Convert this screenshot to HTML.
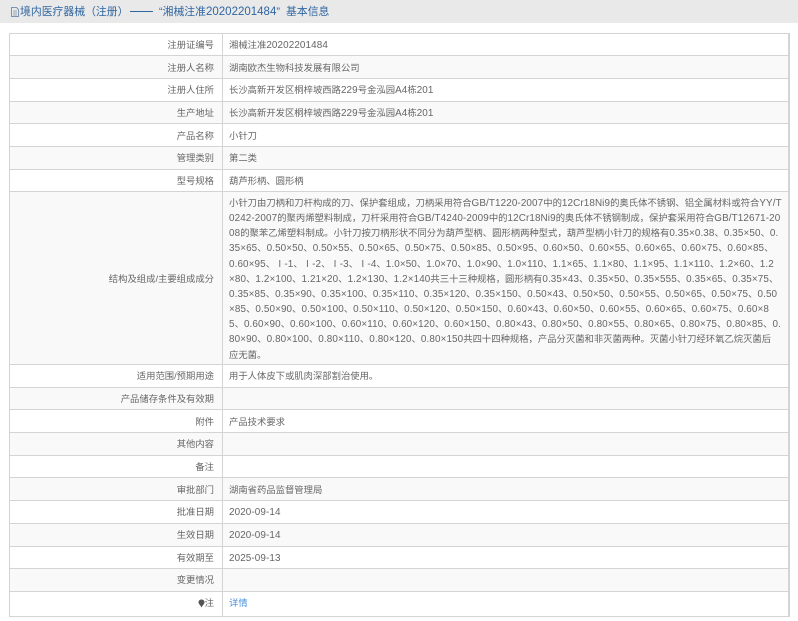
<!DOCTYPE html>
<html lang="zh-CN">
<head>
<meta charset="utf-8">
<title>基本信息</title>
<style>
html,body{margin:0;padding:0;background:#fff}
body{position:relative;width:798px;height:621px;overflow:hidden;font-family:"Liberation Sans","Noto Sans CJK SC",sans-serif;font-size:9.33px;color:#666}
.h{position:absolute;left:0;top:0;width:798px;height:23px;background:#e9e9e9}
.t{position:absolute;top:5px;height:14px;line-height:14px;white-space:nowrap;font-size:10.85px;color:#2f66a0;filter:blur(.2px)}
.t b{font-weight:normal;font-size:11.5px;letter-spacing:0}
.r{position:absolute;left:9px;width:779px;border-top:1px solid #d4d4d4;box-sizing:border-box}
.g{background:#f9f9f9}
.l{position:absolute;left:10px;width:204px;text-align:right;white-space:nowrap;line-height:14px;height:14px;filter:blur(.2px)}
.v{position:absolute;left:229px;white-space:nowrap;line-height:14px;height:14px;filter:blur(.2px)}
b{font-weight:normal;font-size:9.9px;letter-spacing:.11px}
.vl{position:absolute;top:33px;left:222px;width:1px;height:583px;background:#d4d4d4}
.bl{position:absolute;top:33px;left:9px;width:1px;height:584px;background:#d4d4d4}
.br{position:absolute;top:33px;left:788px;width:2px;height:584px;background:#d4d4d4}
.bb{position:absolute;top:616px;left:9px;width:781px;height:1px;background:#d4d4d4}
</style>
</head>
<body>
<div class="h"></div>
<svg style="position:absolute;left:10px;top:6px" width="10" height="12" viewBox="0 0 10 12" fill="none" stroke="#7d93ad" stroke-width="1"><path d="M1.5 1.5H6.5L8.5 3.5V10.5H1.5Z"/><path d="M3 5H7M3 7H7M3 9H7" stroke-width=".7"/></svg>
<div class="t" style="left:20px">境内医疗器械（注册）</div>
<div class="t" style="left:130px;width:23px;height:1px;top:11px;background:#2f66a0"></div>
<div class="t" style="left:159px">“湘械注准<b>20202201484</b>”</div>
<div class="t" style="left:286px">基本信息</div>

<div class="r" style="top:33px;height:22px"></div>
<div class="r g" style="top:55px;height:23px"></div>
<div class="r" style="top:78px;height:23px"></div>
<div class="r g" style="top:101px;height:22px"></div>
<div class="r" style="top:123px;height:23px"></div>
<div class="r g" style="top:146px;height:23px"></div>
<div class="r" style="top:169px;height:22px"></div>
<div class="r g" style="top:191px;height:173px"></div>
<div class="r" style="top:364px;height:23px"></div>
<div class="r g" style="top:387px;height:22px"></div>
<div class="r" style="top:409px;height:23px"></div>
<div class="r g" style="top:432px;height:23px"></div>
<div class="r" style="top:455px;height:22px"></div>
<div class="r g" style="top:477px;height:23px"></div>
<div class="r" style="top:500px;height:23px"></div>
<div class="r g" style="top:523px;height:23px"></div>
<div class="r" style="top:546px;height:22px"></div>
<div class="r g" style="top:568px;height:23px"></div>
<div class="r" style="top:591px;height:25px"></div>
<div class="vl"></div><div class="bl"></div><div class="br"></div><div class="bb"></div>

<div class="l" style="top:38px">注册证编号</div>
<div class="v" style="top:38px">湘械注准<b>20202201484</b></div>
<div class="l" style="top:61px">注册人名称</div>
<div class="v" style="top:61px">湖南欧杰生物科技发展有限公司</div>
<div class="l" style="top:83px">注册人住所</div>
<div class="v" style="top:83px">长沙高新开发区桐梓坡西路<b>229</b>号金泓园<b>A4</b>栋<b>201</b></div>
<div class="l" style="top:106px">生产地址</div>
<div class="v" style="top:106px">长沙高新开发区桐梓坡西路<b>229</b>号金泓园<b>A4</b>栋<b>201</b></div>
<div class="l" style="top:129px">产品名称</div>
<div class="v" style="top:129px">小针刀</div>
<div class="l" style="top:151px">管理类别</div>
<div class="v" style="top:151px">第二类</div>
<div class="l" style="top:174px">型号规格</div>
<div class="v" style="top:174px">葫芦形柄、圆形柄</div>

<div class="l" style="top:272px">结构及组成/主要组成成分</div>
<div class="v" style="top:196px">小针刀由刀柄和刀杆构成的刀、保护套组成，刀柄采用符合<b>GB/T1220-2007</b>中的<b>12Cr18Ni9</b>的奥氏体不锈钢、铝全属材料或符合<b>YY/T</b></div>
<div class="v" style="top:211px"><b>0242-2007</b>的聚丙烯塑料制成，刀杆采用符合<b>GB/T4240-2009</b>中的<b>12Cr18Ni9</b>的奥氏体不锈钢制成，保护套采用符合<b>GB/T12671-20</b></div>
<div class="v" style="top:226px"><b>08</b>的聚苯乙烯塑料制成。小针刀按刀柄形状不同分为葫芦型柄、圆形柄两种型式，葫芦型柄小针刀的规格有<b>0.35×0.38</b>、<b>0.35×50</b>、<b>0.</b></div>
<div class="v" style="top:241px"><b>35×65</b>、<b>0.50×50</b>、<b>0.50×55</b>、<b>0.50×65</b>、<b>0.50×75</b>、<b>0.50×85</b>、<b>0.50×95</b>、<b>0.60×50</b>、<b>0.60×55</b>、<b>0.60×65</b>、<b>0.60×75</b>、<b>0.60×85</b>、</div>
<div class="v" style="top:257px"><b>0.60×95</b>、Ⅰ<b>-1</b>、Ⅰ<b>-2</b>、Ⅰ<b>-3</b>、Ⅰ<b>-4</b>、<b>1.0×50</b>、<b>1.0×70</b>、<b>1.0×90</b>、<b>1.0×110</b>、<b>1.1×65</b>、<b>1.1×80</b>、<b>1.1×95</b>、<b>1.1×110</b>、<b>1.2×60</b>、<b>1.2</b></div>
<div class="v" style="top:272px"><b>×80</b>、<b>1.2×100</b>、<b>1.21×20</b>、<b>1.2×130</b>、<b>1.2×140</b>共三十三种规格，圆形柄有<b>0.35×43</b>、<b>0.35×50</b>、<b>0.35×555</b>、<b>0.35×65</b>、<b>0.35×75</b>、</div>
<div class="v" style="top:287px"><b>0.35×85</b>、<b>0.35×90</b>、<b>0.35×100</b>、<b>0.35×110</b>、<b>0.35×120</b>、<b>0.35×150</b>、<b>0.50×43</b>、<b>0.50×50</b>、<b>0.50×55</b>、<b>0.50×65</b>、<b>0.50×75</b>、<b>0.50</b></div>
<div class="v" style="top:302px"><b>×85</b>、<b>0.50×90</b>、<b>0.50×100</b>、<b>0.50×110</b>、<b>0.50×120</b>、<b>0.50×150</b>、<b>0.60×43</b>、<b>0.60×50</b>、<b>0.60×55</b>、<b>0.60×65</b>、<b>0.60×75</b>、<b>0.60×8</b></div>
<div class="v" style="top:317px"><b>5</b>、<b>0.60×90</b>、<b>0.60×100</b>、<b>0.60×110</b>、<b>0.60×120</b>、<b>0.60×150</b>、<b>0.80×43</b>、<b>0.80×50</b>、<b>0.80×55</b>、<b>0.80×65</b>、<b>0.80×75</b>、<b>0.80×85</b>、<b>0.</b></div>
<div class="v" style="top:332px"><b>80×90</b>、<b>0.80×100</b>、<b>0.80×110</b>、<b>0.80×120</b>、<b>0.80×150</b>共四十四种规格，产品分灭菌和非灭菌两种。灭菌小针刀经环氧乙烷灭菌后</div>
<div class="v" style="top:348px">应无菌。</div>

<div class="l" style="top:369px">适用范围/预期用途</div>
<div class="v" style="top:369px">用于人体皮下或肌肉深部割治使用。</div>
<div class="l" style="top:392px">产品储存条件及有效期</div>
<div class="l" style="top:415px">附件</div>
<div class="v" style="top:415px">产品技术要求</div>
<div class="l" style="top:437px">其他内容</div>
<div class="l" style="top:460px">备注</div>
<div class="l" style="top:483px">审批部门</div>
<div class="v" style="top:483px">湖南省药品监督管理局</div>
<div class="l" style="top:505px">批准日期</div>
<div class="v" style="top:505px"><b>2020-09-14</b></div>
<div class="l" style="top:528px">生效日期</div>
<div class="v" style="top:528px"><b>2020-09-14</b></div>
<div class="l" style="top:551px">有效期至</div>
<div class="v" style="top:551px"><b>2025-09-13</b></div>
<div class="l" style="top:573px">变更情况</div>
<svg style="position:absolute;left:198px;top:599px" width="7" height="9" viewBox="0 0 7 9"><path d="M3.5 .5C5.4 .5 6.5 1.8 6.5 3.3C6.5 5 4.6 6.2 3.5 8.5C2.4 6.2 .5 5 .5 3.3C.5 1.8 1.6 .5 3.5 .5Z" fill="#555"/></svg>
<div class="l" style="top:596px">注</div>
<div class="v" style="top:596px;color:#4a90d9">详情</div>
</body>
</html>
